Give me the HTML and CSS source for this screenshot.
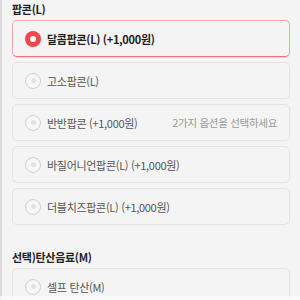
FILE: index.html
```html
<!DOCTYPE html>
<html lang="ko">
	<head>
		<meta charset="UTF-8" />
		<meta name="viewport" content="width=device-width, initial-scale=1.0" />
		<title>옵션 선택</title>
		<link rel="stylesheet" href="styles.css">
	</head>
	<body>
		<main class="options">
			<section class="group">
				<h2>팝콘(L)</h2>
				<ul class="list">
					<li class="item checked">
						<span class="radio"></span>
						<span class="name">달콤팝콘(L) (+1,000원)</span>
					</li>
					<li class="item">
						<span class="radio"></span>
						<span class="name">고소팝콘(L)</span>
					</li>
					<li class="item">
						<span class="radio"></span>
						<span class="name">반반팝콘 (+1,000원)</span>
						<span class="hint">2가지 옵션을 선택하세요</span>
					</li>
					<li class="item">
						<span class="radio"></span>
						<span class="name">바질어니언팝콘(L) (+1,000원)</span>
					</li>
					<li class="item">
						<span class="radio"></span>
						<span class="name">더블치즈팝콘(L) (+1,000원)</span>
					</li>
				</ul>
			</section>

			<section class="group">
				<h2>선택)탄산음료(M)</h2>
				<ul class="list">
					<li class="item">
						<span class="radio"></span>
						<span class="name">셀프 탄산(M)</span>
					</li>
				</ul>
			</section>
		</main>
		<div class="fade"></div>
	</body>
</html>
```

FILE: styles.css
```css
* {
	padding: 0;
	margin: 0;
	box-sizing: border-box;
}
ul {
	list-style: none;
}

body {
	background-color: #f4f4f4;
	font-family: "Noto Sans CJK KR", "Noto Sans", sans-serif;
	color: #222;
	overflow: hidden;
}

.options {
	min-height: 300px;
	border-left: 2px solid #dadada;
	padding: 0 10px;
}

.group + .group {
	margin-top: 23px;
}

h2 {
	font-size: 11px;
	font-weight: bold;
	letter-spacing: -0.3px;
	line-height: 16px;
	padding-top: 1px;
	margin-bottom: 3px;
	color: #222;
}

.list {
	display: flex;
	flex-direction: column;
	gap: 5px;
}

.item {
	display: flex;
	align-items: center;
	gap: 6px;
	height: 37px;
	padding: 0 12px;
	border: 1.5px solid #e3e3e3;
	border-radius: 5px;
	font-size: 11px;
	letter-spacing: -0.3px;
	white-space: nowrap;
	color: #555;
}
.item .name {
	flex: 1;
}
.item .hint {
	font-size: 10.5px;
	color: #999;
}

.radio {
	position: relative;
	flex: none;
	width: 16px;
	height: 16px;
	border: 1px solid #cfcfcf;
	border-radius: 50%;
	background-color: #f7f7f7;
}
.radio::after {
	content: "";
	position: absolute;
	left: 50%;
	top: 50%;
	width: 5px;
	height: 5px;
	margin: -2.5px 0 0 -2.5px;
	border-radius: 50%;
	background-color: #e2e2e2;
}

.item.checked {
	border-color: #f8a2a2;
	border-bottom-color: #f07272;
	box-shadow: 0 1px 0 rgba(240, 100, 100, 0.25);
	color: #222;
	font-weight: bold;
}
.item.checked .radio {
	border: none;
	background-color: #f0474a;
}
.item.checked .radio::after {
	width: 6px;
	height: 6px;
	margin: -3px 0 0 -3px;
	background-color: #fff;
}

.fade {
	position: fixed;
	left: 0;
	right: 0;
	bottom: 0;
	height: 4px;
	background-color: rgba(250, 250, 250, 0.8);
}
```
